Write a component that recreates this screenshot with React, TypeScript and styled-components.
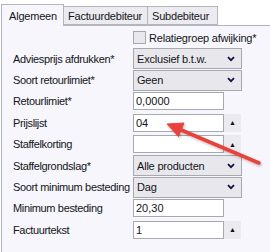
import styled, { createGlobalStyle } from "styled-components";

const GlobalStyle = createGlobalStyle`
    body {
        margin: 0;
        background: #ffffff;
        font-family: "Liberation Sans", Arial, sans-serif;
        font-size: 11px;
        color: #141420;
    }
`

type Field =
    | { label: string; kind: 'select'; value: string }
    | { label: string; kind: 'text'; value: string }
    | { label: string; kind: 'spin'; value: string };

const fields: Field[] = [
    { label: 'Adviesprijs afdrukken*', kind: 'select', value: 'Exclusief b.t.w.' },
    { label: 'Soort retourlimiet*', kind: 'select', value: 'Geen' },
    { label: 'Retourlimiet*', kind: 'text', value: '0,0000' },
    { label: 'Prijslijst', kind: 'spin', value: '04' },
    { label: 'Staffelkorting', kind: 'spin', value: '' },
    { label: 'Staffelgrondslag*', kind: 'select', value: 'Alle producten' },
    { label: 'Soort minimum besteding', kind: 'select', value: 'Dag' },
    { label: 'Minimum besteding', kind: 'text', value: '20,30' },
    { label: 'Factuurtekst', kind: 'spin', value: '1' },
];

const tabs = [
    { name: 'Algemeen', width: 63 },
    { name: 'Factuurdebiteur', width: 85 },
    { name: 'Subdebiteur', width: 71 },
];

const Chevron = () => (
    <svg width="8" height="6" viewBox="0 0 8 6">
        <path d="M1 1.2 L4 4.2 L7 1.2" fill="none" stroke="#10104a" strokeWidth="1.8" />
    </svg>
);

const App = () => {
    return (
        <Screen>
            <GlobalStyle />
            <TabStrip>
                {tabs.map((tab, index) => (
                    <Tab key={tab.name} active={index === 0} w={tab.width}>{tab.name}</Tab>
                ))}
            </TabStrip>
            <Panel>
                <CheckRow>
                    <CheckBox />
                    <CheckLabel>Relatiegroep afwijking*</CheckLabel>
                </CheckRow>
                <FieldGrid>
                    {fields.map((field) => (
                        <FieldRow key={field.label}>
                            <Label>{field.label}</Label>
                            {field.kind === 'select' && (
                                <Select>
                                    <span>{field.value}</span>
                                    <Chevron />
                                </Select>
                            )}
                            {field.kind === 'text' && <TextBox>{field.value}</TextBox>}
                            {field.kind === 'spin' && (
                                <Spin>
                                    <TextBox>{field.value}</TextBox>
                                    <SpinButton>▲</SpinButton>
                                </Spin>
                            )}
                        </FieldRow>
                    ))}
                </FieldGrid>
            </Panel>
            <Arrow width="270" height="252" viewBox="0 0 270 252">
                <defs>
                    <filter id="shade" x="-20%" y="-20%" width="140%" height="140%">
                        <feDropShadow dx="1" dy="1.5" stdDeviation="1.2" floodColor="#000" floodOpacity="0.25" />
                    </filter>
                </defs>
                <g filter="url(#shade)" fill="#e8423c" stroke="#e8423c">
                    <line x1="259" y1="163" x2="180" y2="129.5" strokeWidth="3.6" strokeLinecap="round" />
                    <polygon points="167,124 184,123 178.5,136.5" strokeWidth="1" strokeLinejoin="round" />
                </g>
            </Arrow>
        </Screen>
    )
}

export default App;

const Screen = styled.div`
    position: relative;
    width: 270px;
    height: 252px;
    overflow: hidden;
`

const TabStrip = styled.div`
    display: flex;
    align-items: flex-end;
    height: 25px;
    padding-left: 1px;
`

const Tab = styled.div<{ active: boolean; w: number }>`
    box-sizing: border-box;
    display: flex;
    align-items: center;
    width: ${(p) => p.w}px;
    padding-left: ${(p) => (p.active ? '7px' : '4px')};
    padding-top: ${(p) => (p.active ? '0' : '1px')};
    height: ${(p) => (p.active ? '22px' : '19px')};
    background: ${(p) => (p.active ? '#f6f6fc' : '#ececf0')};
    border: 1px solid #b4b4bc;
    border-bottom: ${(p) => (p.active ? 'none' : '1px solid #b4b4bc')};
    margin-bottom: ${(p) => (p.active ? '-1px' : '0')};
    margin-left: -1px;
    position: relative;
    z-index: ${(p) => (p.active ? 1 : 0)};
    white-space: nowrap;
    letter-spacing: -0.2px;
    &:first-child { margin-left: 0; }
`

const Panel = styled.div`
    box-sizing: border-box;
    height: 227px;
    margin-left: 1px;
    border-top: 1px solid #b4b4bc;
    border-left: 1px solid #b4b4bc;
    background: #f6f6fc;
    padding: 5px 0 0 11px;
`

const CheckRow = styled.div`
    display: flex;
    align-items: center;
    gap: 3px;
    height: 13px;
    margin-left: 120px;
`

const CheckBox = styled.div`
    box-sizing: border-box;
    width: 13px;
    height: 13px;
    background: #e9e9ed;
    border: 1px solid #a6a6ae;
`

const CheckLabel = styled.span`
    white-space: nowrap;
    letter-spacing: -0.2px;
`

const FieldGrid = styled.div`
    display: grid;
    grid-auto-rows: 21.4px;
    margin-top: 4px;
`

const FieldRow = styled.div`
    display: grid;
    grid-template-columns: 120px 109px;
    align-items: center;
`

const Label = styled.span`
    white-space: nowrap;
    letter-spacing: -0.35px;
`

const Select = styled.div`
    box-sizing: border-box;
    height: 21px;
    display: flex;
    align-items: center;
    justify-content: space-between;
    padding: 0 6px 0 3px;
    background: #e8e8ec;
    border: 1px solid #a8a8b0;
    letter-spacing: -0.2px;
`

const TextBox = styled.div`
    box-sizing: border-box;
    width: 91px;
    height: 18px;
    display: flex;
    align-items: center;
    padding-left: 2px;
    background: #ffffff;
    border: 1px solid #a8a8b0;
`

const Spin = styled.div`
    display: flex;
    align-items: stretch;
`

const SpinButton = styled.div`
    width: 17px;
    display: flex;
    align-items: center;
    justify-content: center;
    background: #ebebef;
    font-size: 7px;
    color: #101018;
`

const Arrow = styled.svg`
    position: absolute;
    left: 0;
    top: 0;
    pointer-events: none;
`
